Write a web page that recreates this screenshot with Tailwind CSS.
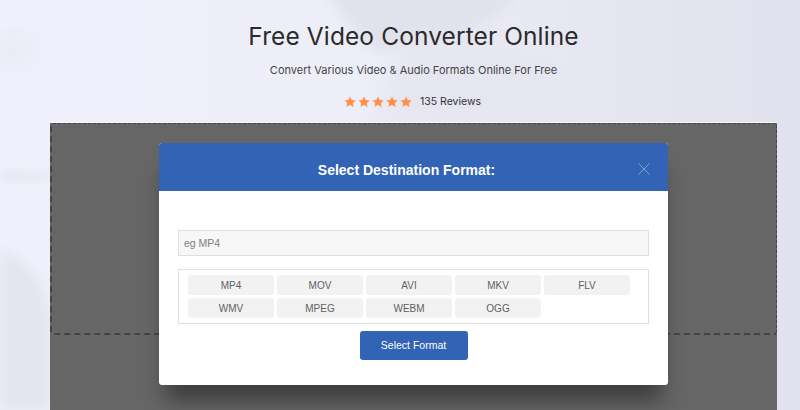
<!DOCTYPE html>
<html lang="en">
<head>
  <meta charset="UTF-8" />
  <title>Free Video Converter Online</title>
  <script src="https://cdn.jsdelivr.net/npm/@tailwindcss/browser@4"></script>
</head>
<body class="relative w-[800px] h-[410px] overflow-hidden bg-[#f0f0fc] font-['Inter','Open_Sans',sans-serif]">

  <!-- Blurred background photo -->
  <svg class="absolute inset-0" width="800" height="410" viewBox="0 0 800 410">
    <defs>
      <linearGradient id="side" x1="0" y1="0" x2="1" y2="0">
        <stop offset="0" stop-color="#f0f0fc" />
        <stop offset="0.45" stop-color="#eeeef9" />
        <stop offset="0.8" stop-color="#e5e5f0" />
        <stop offset="1" stop-color="#e2e2ee" />
      </linearGradient>
      <filter id="b6"><feGaussianBlur stdDeviation="6" /></filter>
      <filter id="b12"><feGaussianBlur stdDeviation="12" /></filter>
    </defs>
    <rect width="800" height="410" fill="url(#side)" />
    <path d="M325 -10 L520 -10 C500 20 470 40 395 50 C380 60 355 40 325 -10Z" fill="#e2e2ec" filter="url(#b6)" />
    <path d="M395 50 C440 30 520 40 560 70 C570 90 570 110 560 125 L370 125 C390 100 395 70 395 50Z" fill="#e6e6f1" filter="url(#b12)" />
    <path d="M0 250 C25 255 40 280 50 310 L50 410 L0 410Z" fill="#e5e5f0" filter="url(#b6)" />
    <path d="M0 170 L50 172 L50 182 L0 182Z" fill="#e8e8f3" filter="url(#b6)" />
    <path d="M0 30 L40 50 L0 70Z" fill="#e8e8f2" filter="url(#b12)" />
  </svg>

  <div class="relative flex flex-col items-center h-full pl-[27px]">
    <h1 class="mt-[21px] h-[30px] leading-[30px] text-[24.5px] font-normal tracking-[0.1px] text-[#2b2b2b] whitespace-nowrap">Free Video Converter Online</h1>
    <p class="mt-[11px] h-[16px] leading-[16px] text-[11px] text-[#444] whitespace-nowrap">Convert Various Video &amp; Audio Formats Online For Free</p>
    <div class="mt-[16px] h-[16px] pr-[2px] flex items-center whitespace-nowrap">
      <div class="flex gap-[2px] text-[#ff8f45]">
        <svg class="w-[12px] h-[12px]" viewBox="0 0 24 24" fill="currentColor"><path d="M12 1l3.4 7.2 7.8 1-5.7 5.4 1.5 7.8L12 17.6l-7 3.8 1.5-7.8L.8 9.200l7.800-1z" /></svg>
        <svg class="w-[12px] h-[12px]" viewBox="0 0 24 24" fill="currentColor"><path d="M12 1l3.4 7.2 7.8 1-5.7 5.4 1.5 7.8L12 17.6l-7 3.8 1.5-7.8L.8 9.200l7.800-1z" /></svg>
        <svg class="w-[12px] h-[12px]" viewBox="0 0 24 24" fill="currentColor"><path d="M12 1l3.4 7.2 7.8 1-5.7 5.4 1.5 7.8L12 17.6l-7 3.8 1.5-7.8L.8 9.200l7.800-1z" /></svg>
        <svg class="w-[12px] h-[12px]" viewBox="0 0 24 24" fill="currentColor"><path d="M12 1l3.4 7.2 7.8 1-5.7 5.4 1.5 7.8L12 17.6l-7 3.8 1.5-7.8L.8 9.200l7.800-1z" /></svg>
        <svg class="w-[12px] h-[12px]" viewBox="0 0 24 24" fill="currentColor"><path d="M12 1l3.4 7.2 7.8 1-5.7 5.4 1.5 7.8L12 17.6l-7 3.8 1.5-7.8L.8 9.200l7.800-1z" /></svg>
      </div>
      <span class="ml-[8px] text-[10.5px] text-[#333]">135 Reviews</span>
    </div>

    <!-- Upload area behind the dialog -->
    <div class="mt-[13px] w-[727px] flex-1 bg-[#666666] shadow-[0_-1px_0_#f8f8fc]">
      <div class="h-[212px] border-2 border-r border-t-[1.5px] border-dashed border-[#444444] rounded-[3px]"></div>
    </div>
  </div>

  <!-- Format dialog -->
  <div class="absolute left-[159px] top-[143px] w-[509px] h-[242px] bg-white rounded-[3px] shadow-[0_22px_20px_-6px_rgba(0,0,0,0.4)]">
    <div class="relative h-[48px] pt-[6px] pr-[14px] bg-[#3263b5] rounded-t-[3px] flex items-center justify-center">
      <h2 class="font-['Liberation_Sans',sans-serif] text-[14px] font-bold text-white">Select Destination Format:</h2>
      <svg class="absolute left-[479px] top-[20px] w-[12px] h-[12px]" viewBox="0 0 12 12" stroke="#7f9fd6" stroke-width="1" fill="none"><path d="M.5.500l11 11M11.500.500l-11 11" /></svg>
    </div>
    <div class="flex flex-col items-center px-[19px] font-['Liberation_Sans',sans-serif]">
      <input type="text" placeholder="eg MP4" class="mt-[39px] w-full h-[26px] px-[5px] bg-[#f7f7f7] border border-[#dfdfdf] text-[10.5px] placeholder:text-[#808080] outline-none" />
      <div class="mt-[13px] w-full h-[55px] border border-[#dfdfdf] pl-[9px] pt-[5px] grid grid-cols-[repeat(5,86px)] gap-x-[3px] gap-y-[3px] content-start">
        <div class="h-[20px] rounded-[3px] bg-[#f2f2f2] flex items-center justify-center text-[10px] text-[#5f5f5f]">MP4</div>
        <div class="h-[20px] rounded-[3px] bg-[#f2f2f2] flex items-center justify-center text-[10px] text-[#5f5f5f]">MOV</div>
        <div class="h-[20px] rounded-[3px] bg-[#f2f2f2] flex items-center justify-center text-[10px] text-[#5f5f5f]">AVI</div>
        <div class="h-[20px] rounded-[3px] bg-[#f2f2f2] flex items-center justify-center text-[10px] text-[#5f5f5f]">MKV</div>
        <div class="h-[20px] rounded-[3px] bg-[#f2f2f2] flex items-center justify-center text-[10px] text-[#5f5f5f]">FLV</div>
        <div class="h-[20px] rounded-[3px] bg-[#f2f2f2] flex items-center justify-center text-[10px] text-[#5f5f5f]">WMV</div>
        <div class="h-[20px] rounded-[3px] bg-[#f2f2f2] flex items-center justify-center text-[10px] text-[#5f5f5f]">MPEG</div>
        <div class="h-[20px] rounded-[3px] bg-[#f2f2f2] flex items-center justify-center text-[10px] text-[#5f5f5f]">WEBM</div>
        <div class="h-[20px] rounded-[3px] bg-[#f2f2f2] flex items-center justify-center text-[10px] text-[#5f5f5f]">OGG</div>
      </div>
      <button class="mt-[7px] w-[108px] h-[29px] rounded-[3px] bg-[#3263b5] text-white text-[10.5px]">Select Format</button>
    </div>
  </div>

</body>
</html>
